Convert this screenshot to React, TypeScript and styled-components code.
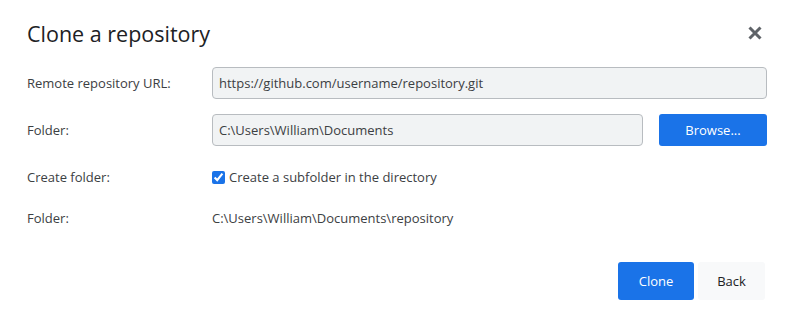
import React, { useState } from 'react';
import styled, { createGlobalStyle } from 'styled-components';

const GlobalStyle = createGlobalStyle`
  html, body {
    margin: 0;
    padding: 0;
    background: #ffffff;
  }
  body {
    font-family: 'Open Sans', 'Noto Sans', 'Liberation Sans', sans-serif;
    color: #202124;
  }
`;

// === Layout ===
const Dialog = styled.div`
  width: 794px;
  height: 318px;
  box-sizing: border-box;
  padding: 17px 27px 0 27px;
  display: flex;
  flex-direction: column;
`;

const Header = styled.div`
  display: flex;
  align-items: center;
  justify-content: space-between;
  height: 32px;
`;

const Title = styled.h1`
  margin: 0;
  font-size: 21.5px;
  font-weight: 400;
  color: #202124;
`;

const CloseButton = styled.button`
  width: 20px;
  height: 20px;
  margin-right: 2px;
  padding: 0;
  border: none;
  background: transparent;
  display: flex;
  align-items: center;
  justify-content: center;
  cursor: pointer;
`;

const Form = styled.div`
  margin-top: 18px;
  display: grid;
  grid-template-columns: 185px 1fr;
  grid-auto-rows: auto;
  row-gap: 15px;
  align-items: center;
`;

const Label = styled.div`
  font-size: 13px;
  color: #3c4043;
`;

const FieldRow = styled.div`
  display: flex;
  align-items: center;
  gap: 16px;
  min-height: 32px;
`;

const TextInput = styled.input`
  flex: 1;
  height: 32px;
  box-sizing: border-box;
  padding: 0 6px;
  border: 1px solid #b8bcc0;
  border-radius: 4px;
  background: #f1f3f4;
  font-family: inherit;
  font-size: 13px;
  color: #3c4043;
  outline: none;
`;

const PrimaryButton = styled.button<{ $width: number; $height: number }>`
  width: ${p => p.$width}px;
  height: ${p => p.$height}px;
  border: none;
  border-radius: 3px;
  background: #1a73e8;
  color: #ffffff;
  font-family: inherit;
  font-size: 13px;
  cursor: pointer;
`;

const SecondaryButton = styled.button`
  width: 67px;
  height: 38px;
  border: none;
  border-radius: 3px;
  background: #f8f9fa;
  color: #202124;
  font-family: inherit;
  font-size: 13px;
  cursor: pointer;
`;

const CheckLabel = styled.label`
  display: flex;
  align-items: center;
  gap: 4px;
  font-size: 13px;
  color: #3c4043;
  cursor: pointer;
`;

const Checkbox = styled.input`
  width: 13px;
  height: 13px;
  margin: 0;
  accent-color: #1a73e8;
`;

const Value = styled.div`
  font-size: 13px;
  color: #3c4043;
  min-height: 20px;
  display: flex;
  align-items: center;
`;

const Footer = styled.div`
  margin-top: 34px;
  display: flex;
  justify-content: flex-end;
  gap: 4px;
  padding-right: 2px;
`;

// === Icon ===
const CloseIcon = () => (
  <svg width="16" height="16" viewBox="0 0 16 16">
    <path d="M2.5 2.5 L13.5 13.5 M13.5 2.5 L2.5 13.5" stroke="#5f6368" strokeWidth="3" strokeLinecap="butt" />
  </svg>
);

export default function App() {
  const [url, setUrl] = useState('https://github.com/username/repository.git');
  const [folder, setFolder] = useState('C:\\Users\\William\\Documents');
  const [subfolder, setSubfolder] = useState(true);

  const repoName = url.split('/').pop()?.replace(/\.git$/, '') || '';
  const target = subfolder ? `${folder}\\${repoName}` : folder;

  return (
    <>
      <GlobalStyle />
      <Dialog>
        <Header>
          <Title>Clone a repository</Title>
          <CloseButton aria-label="Close">
            <CloseIcon />
          </CloseButton>
        </Header>

        <Form>
          <Label>Remote repository URL:</Label>
          <FieldRow>
            <TextInput value={url} onChange={e => setUrl(e.target.value)} />
          </FieldRow>

          <Label>Folder:</Label>
          <FieldRow>
            <TextInput value={folder} onChange={e => setFolder(e.target.value)} />
            <PrimaryButton $width={108} $height={32}>Browse...</PrimaryButton>
          </FieldRow>

          <Label>Create folder:</Label>
          <FieldRow>
            <CheckLabel>
              <Checkbox
                type="checkbox"
                checked={subfolder}
                onChange={e => setSubfolder(e.target.checked)}
              />
              Create a subfolder in the directory
            </CheckLabel>
          </FieldRow>

          <Label>Folder:</Label>
          <Value>{target}</Value>
        </Form>

        <Footer>
          <PrimaryButton $width={76} $height={38}>Clone</PrimaryButton>
          <SecondaryButton>Back</SecondaryButton>
        </Footer>
      </Dialog>
    </>
  );
}
